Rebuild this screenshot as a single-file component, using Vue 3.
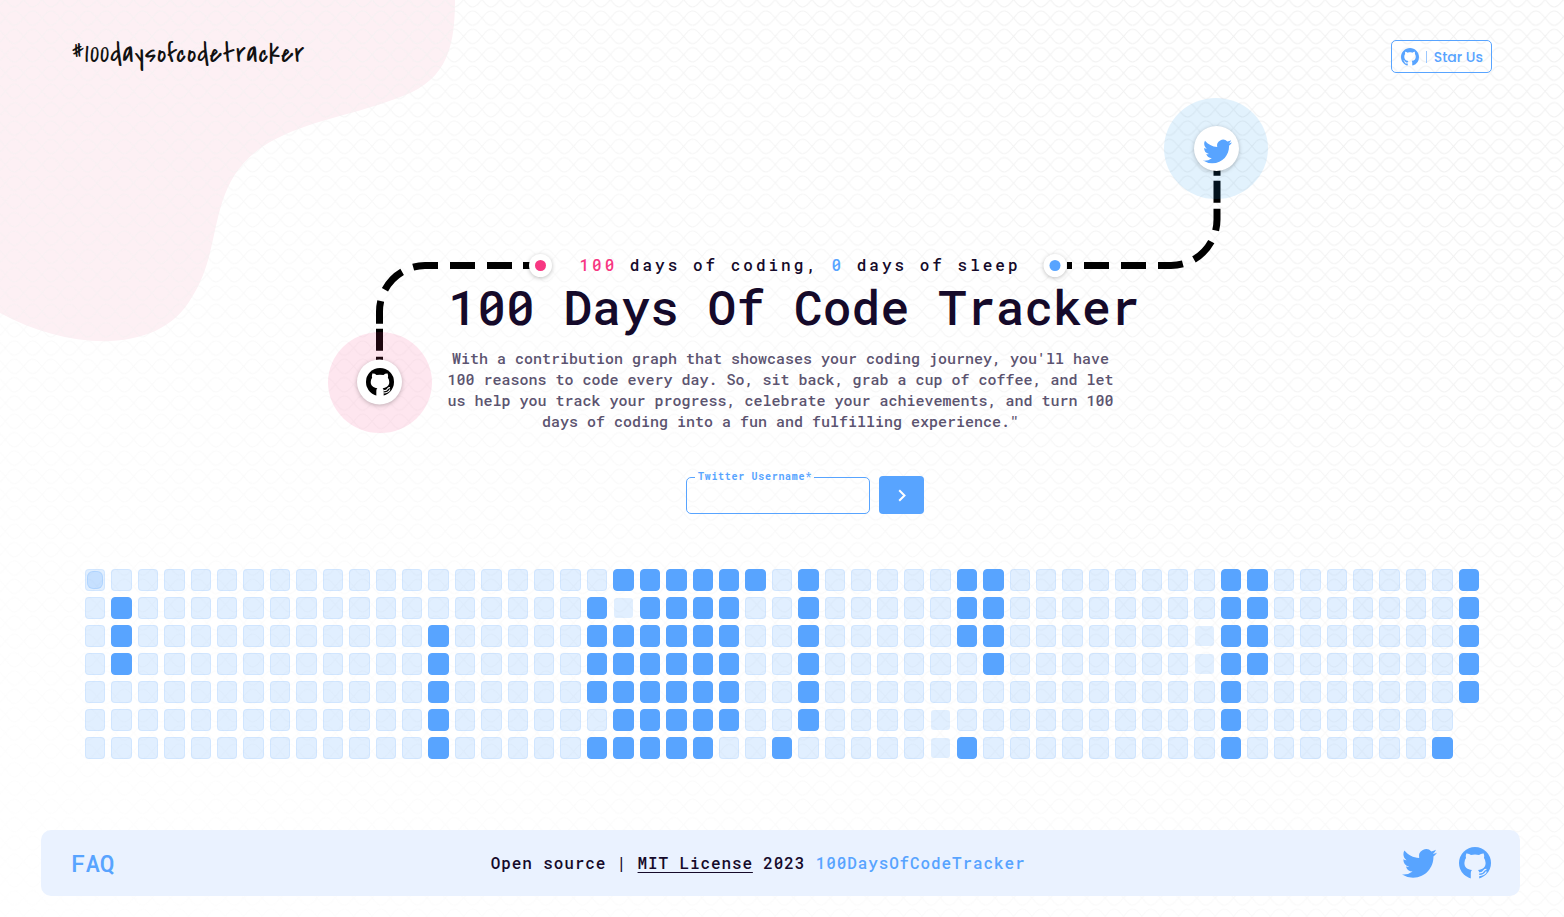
<script setup>
import { h } from 'vue'

const filled = [
  [20, 21, 22, 23, 24, 25, 27, 33, 34, 43, 44, 52],
  [1, 19, 21, 22, 23, 24, 27, 33, 34, 43, 44, 52],
  [1, 13, 19, 20, 21, 22, 23, 24, 27, 33, 34, 43, 44, 52],
  [1, 13, 19, 20, 21, 22, 23, 24, 27, 34, 43, 44, 52],
  [13, 19, 20, 21, 22, 23, 24, 27, 43, 52],
  [13, 20, 21, 22, 23, 24, 27, 43],
  [13, 19, 20, 21, 22, 23, 26, 33, 43, 51]
]
const faint = ['1-20', '5-32', '6-32', '2-42', '3-42']

const cells = []
for (let row = 0; row < 7; row++) {
  for (let col = 0; col < 53; col++) {
    cells.push({
      id: `${row}-${col}`,
      on: filled[row].includes(col),
      faint: faint.includes(`${row}-${col}`),
      current: row === 0 && col === 0,
      blank: col === 52 && row > 4
    })
  }
}

const TwitterIcon = () =>
  h('svg', { viewBox: '0 0 24 24', 'aria-hidden': 'true' }, [
    h('path', {
      fill: 'currentColor',
      d: 'M23.953 4.57a10 10 0 01-2.825.775 4.958 4.958 0 002.163-2.723c-.951.555-2.005.959-3.127 1.184a4.92 4.92 0 00-8.384 4.482C7.69 8.095 4.067 6.13 1.64 3.162a4.822 4.822 0 00-.666 2.475c0 1.71.87 3.213 2.188 4.096a4.904 4.904 0 01-2.228-.616v.06a4.923 4.923 0 003.946 4.827 4.996 4.996 0 01-2.212.085 4.936 4.936 0 004.604 3.417 9.867 9.867 0 01-6.102 2.105c-.39 0-.779-.023-1.17-.067a13.995 13.995 0 007.557 2.209c9.053 0 13.998-7.496 13.998-13.985 0-.21 0-.42-.015-.63A9.935 9.935 0 0024 4.59z'
    })
  ])

const CatIcon = (props) =>
  h('svg', { viewBox: '0 0 32 32', 'aria-hidden': 'true' }, [
    h('circle', { cx: 16, cy: 16, r: 16, fill: 'currentColor' }),
    h('path', {
      fill: props.cut,
      d: 'M7.3 6.4Q10 6.2 12 8Q16 7.2 20 8Q22 6.2 24.7 6.4Q25.6 9 25 11Q26.6 13 26.6 16C26.6 20.6 23.6 22.4 19 23Q20.2 24 20.2 26V32H11.8V26Q11.8 24 13 23C8.4 22.4 5.4 20.6 5.4 16Q5.4 13 7 11Q6.4 9 7.3 6.4Z'
    }),
    h('path', {
      fill: 'none', stroke: props.cut, 'stroke-width': 1.2,
      d: 'M20 25.800Q23.400 26.200 24.800 23.600Q25.600 22.400 27.400 22.400M20 28.600Q25.400 28.600 27.400 24.600'
    })
  ])
CatIcon.props = ['cut']
</script>

<template>
  <div class="page">
    <svg class="blob" width="456" height="342" viewBox="0 0 456 342" aria-hidden="true">
      <path d="M0 0H455C455 55 443 83 395 99C350 116 300 122 262 147C205 187 225 245 192 297C160 355 70 351 0 313Z" fill="#fdf0f4" />
    </svg>
    <svg class="texture" width="100%" height="100%" aria-hidden="true">
      <defs>
        <pattern id="waves" x="16" y="27" width="110" height="55" patternUnits="userSpaceOnUse" patternTransform="scale(0.3333)">
          <g fill="none" stroke="#f1f1f1" stroke-width="3">
            <path d="M0 27C12 15 14 6 27 6S43 15 55 27S69 49 82 49S98 39 110 27" />
            <path d="M0 27C12 39 14 49 27 49S43 39 55 27S69 6 82 6S98 15 110 27" />
          </g>
        </pattern>
      </defs>
      <rect width="100%" height="100%" fill="url(#waves)" />
    </svg>

    <header class="header">
      <a class="logo" href="#">#100daysofcodetracker</a>
      <a class="star" href="#">
        <svg viewBox="0 0 16 16" aria-hidden="true">
          <path fill="currentColor" d="M8 0C3.58 0 0 3.58 0 8c0 3.54 2.29 6.53 5.47 7.59.4.07.55-.17.55-.38 0-.19-.01-.82-.01-1.49-2.01.37-2.53-.49-2.69-.94-.09-.23-.48-.94-.82-1.13-.28-.15-.68-.52-.01-.53.63-.01 1.08.58 1.23.82.72 1.21 1.87.87 2.33.66.07-.52.28-.87.51-1.07-1.78-.2-3.64-.89-3.64-3.95 0-.87.31-1.59.82-2.15-.08-.2-.36-1.02.08-2.12 0 0 .67-.21 2.2.82.64-.18 1.32-.27 2-.27s1.36.09 2 .27c1.53-1.04 2.2-.82 2.2-.82.44 1.1.16 1.92.08 2.12.51.56.82 1.27.82 2.15 0 3.07-1.87 3.75-3.65 3.95.29.25.54.73.54 1.48 0 1.07-.01 1.93-.01 2.2 0 .21.15.46.55.38A8.01 8.01 0 0016 8c0-4.42-3.58-8-8-8z" />
        </svg>
        <span class="bar"></span>
        <span>Star Us</span>
      </a>
    </header>

    <main>
      <section class="hero">
        <svg class="route route-left" width="232" height="186" viewBox="324 250 232 186" aria-hidden="true">
          <path d="M530 265.500H425A46 46 0 0 0 379.500 311.500V362" fill="none" stroke="#000" stroke-width="7" stroke-dasharray="7 11 25 12 25 12 25 12 25 12 23 5 22 6 8 99" />
          <ellipse cx="380" cy="382.500" rx="52" ry="50.500" fill="#f4317f" fill-opacity="0.12" />
          <circle class="raised" cx="379.500" cy="382" r="22.500" fill="#fff" />
          <circle class="raised" cx="540.500" cy="265.500" r="11.500" fill="#fff" />
          <circle cx="540.500" cy="265.500" r="5.500" fill="#f73782" />
        </svg>
        <span class="badge badge-left"><CatIcon cut="#fff" /></span>
        <svg class="route route-right" width="232" height="190" viewBox="1040 94 232 190" aria-hidden="true">
          <path d="M1067 265.500H1171A46 46 0 0 0 1217 219.500V170" fill="none" stroke="#000" stroke-width="7" stroke-dasharray="5 12 25 12 25 12 25 12 25 12 22 6 22 5 8 99" />
          <ellipse cx="1216" cy="148.500" rx="52" ry="50.500" fill="#1d9bf0" fill-opacity="0.13" />
          <circle class="raised" cx="1216.500" cy="148.500" r="22.500" fill="#fff" />
          <circle class="raised" cx="1055" cy="265.500" r="11.500" fill="#fff" />
          <circle cx="1055" cy="265.500" r="5.500" fill="#58a4ff" />
        </svg>
        <span class="badge badge-right"><TwitterIcon /></span>

        <p class="tagline"><b class="pink">100</b> days of coding, <b class="blue">0</b> days of sleep</p>
        <h1>100 Days Of Code Tracker</h1>
        <p class="intro">With a contribution graph that showcases your coding journey, you'll have 100 reasons to code every day. So, sit back, grab a cup of coffee, and let us help you track your progress, celebrate your achievements, and turn 100 days of coding into a fun and fulfilling experience."</p>
        <form class="form" @submit.prevent>
          <fieldset>
            <legend><label for="username">Twitter Username*</label></legend>
            <input id="username" type="text" name="username" />
          </fieldset>
          <button type="submit" aria-label="Go">
            <svg width="8" height="13" viewBox="0 0 8 13" aria-hidden="true">
              <path d="M1.200 1.200L6.500 6.500L1.200 11.800" fill="none" stroke="#fff" stroke-width="2" />
            </svg>
          </button>
        </form>
      </section>

      <section class="graph" role="img" aria-label="Contribution graph">
        <span v-for="c in cells" :key="c.id" class="cell" :class="{ on: c.on, faint: c.faint, current: c.current, blank: c.blank }"></span>
      </section>
    </main>

    <footer class="footer">
      <a class="faq" href="#">FAQ</a>
      <p>Open source | <a class="license" href="#">MIT License</a> 2023 <a class="blue" href="#">100DaysOfCodeTracker</a></p>
      <div class="social">
        <a href="#" aria-label="Twitter"><TwitterIcon /></a>
        <a class="gh" href="#" aria-label="GitHub"><CatIcon cut="#eaf2ff" /></a>
      </div>
    </footer>
  </div>
</template>

<style>
body { margin: 0; background: #fff; }
</style>

<style scoped>
.page {
  position: relative;
  box-sizing: border-box;
  min-height: 100vh;
  display: flex;
  flex-direction: column;
  overflow: hidden;
  color: #150a2a;
  font-family: "Roboto Mono", "DejaVu Sans Mono", monospace;
  font-weight: 500;
}
.page > * { position: relative; }
.page > .blob, .page > .texture { position: absolute; top: 0; left: 0; pointer-events: none; }
.texture { mask-image: linear-gradient(to top right, rgba(0, 0, 0, 0.1), rgba(0, 0, 0, 0.5) 50%, #000 85%); }
a { color: inherit; text-decoration: none; }
p, h1 { margin: 0; }
.blue { color: #58a4ff; }
.pink { color: #f73782; }

.header {
  display: flex;
  justify-content: space-between;
  align-items: flex-start;
  padding: 40px 72px 0;
}
.logo {
  font: 400 28px/28px "Covered By Your Grace", "Shadows Into Light Two", "Patrick Hand", Lato, sans-serif;
  letter-spacing: 1px;
  color: #111;
}
.star {
  box-sizing: border-box;
  height: 33px;
  padding: 0 8px 0 9px;
  display: flex;
  align-items: center;
  gap: 7px;
  border: 1px solid #58a4ff;
  border-radius: 5px;
  color: #58a4ff;
  font: 500 14px/20px Poppins, Inter, sans-serif;
}
.star svg { width: 18px; height: 18px; }
.bar { width: 1px; height: 12px; background: #9cc8ff; }

.hero {
  position: relative;
  width: 940px;
  margin: 25px auto 0;
  left: 16px;
  padding-top: 154px;
  display: flex;
  flex-direction: column;
  align-items: center;
}
.route, .badge { position: absolute; }
.route-left { left: -4px; top: 152px; }
.route-right { right: -4px; top: -4px; }
.raised { filter: drop-shadow(0 1px 2px rgba(0, 0, 0, 0.25)); }
.badge { display: grid; color: #000; }
.badge svg { width: 28px; height: 28px; }
.badge-left { left: 38px; top: 270px; }
.badge-right { right: 36px; top: 39px; color: #58a4ff; }
.badge-right svg { width: 29px; height: 29px; }

.tagline {
  margin-left: 4px;
  font-size: 16px;
  line-height: 26px;
  letter-spacing: 3px;
}
.tagline b { font-weight: 500; }
h1 {
  margin-right: 8px;
  font-size: 48px;
  line-height: 58px;
  font-weight: 500;
  white-space: nowrap;
}
.intro {
  width: 680px;
  margin: 12px 35px 0 0;
  font-size: 15px;
  line-height: 21px;
  text-align: center;
  color: #5c5470;
}
.form {
  display: flex;
  align-items: flex-end;
  gap: 9px;
  margin: 39px 0 0 14px;
}
fieldset {
  box-sizing: border-box;
  width: 184px;
  height: 43px;
  margin: 0;
  padding: 0 8px;
  border: 1px solid #58a4ff;
  border-radius: 5px;
}
legend {
  padding: 0 2px 0 3px;
  font-size: 10px;
  line-height: 12px;
  font-weight: 700;
  letter-spacing: 0.07em;
  color: #58a4ff;
}
fieldset input {
  width: 100%;
  height: 26px;
  padding: 0 4px;
  border: 0;
  outline: 0;
  background: transparent;
  font: inherit;
  box-sizing: border-box;
}
.form button {
  width: 45px;
  height: 38px;
  padding: 0;
  border: 0;
  border-radius: 4px;
  background: #58a4ff;
  display: grid;
  place-items: center;
}

.graph {
  display: grid;
  grid-template-columns: repeat(53, 1fr);
  grid-auto-rows: 22px;
  gap: 6px;
  margin: 55px 85px 0;
}
.cell {
  box-sizing: border-box;
  border: 1px solid rgba(88, 164, 255, 0.12);
  border-radius: 4px;
  background: rgba(88, 164, 255, 0.18);
}
.cell.faint { border-color: transparent; background-clip: padding-box; }
.cell.on { background: #58a4ff; border-color: #58a4ff; }
.cell.blank { visibility: hidden; }
.cell.current { display: grid; padding: 1px; }
.cell.current::before {
  content: "";
  border: 1px solid rgba(88, 164, 255, 0.2);
  border-radius: 6px;
  background: rgba(88, 164, 255, 0.2);
}

.footer {
  box-sizing: border-box;
  height: 66px;
  margin: auto 44px 21px 41px;
  padding: 0 29px 0 30px;
  display: flex;
  align-items: center;
  justify-content: space-between;
  border-radius: 10px;
  background: #eaf2ff;
  font-size: 16px;
  line-height: 24px;
}
.footer p { letter-spacing: 0.055em; }
.faq { font-size: 24px; color: #58a4ff; }
.license { text-decoration: underline; text-underline-offset: 3px; }
.social { display: flex; align-items: center; gap: 22px; color: #58a4ff; }
.social a { display: grid; }
.social svg { width: 35px; height: 35px; }
.social .gh svg { width: 32px; height: 32px; }
</style>
